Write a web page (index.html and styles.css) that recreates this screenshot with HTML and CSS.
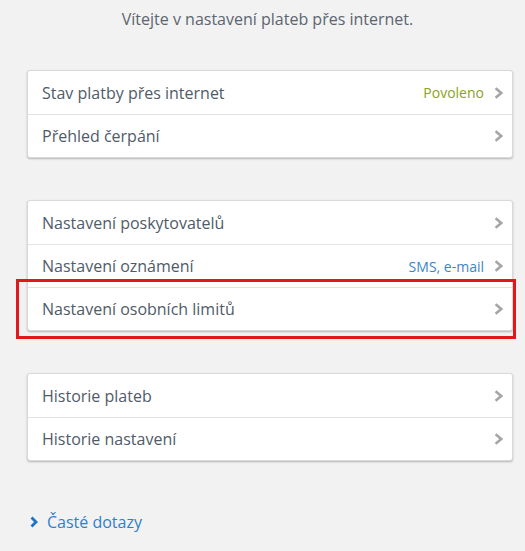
FILE: index.html
```html
<!DOCTYPE html>
<html lang="cs">
<head>
<meta charset="utf-8">
<link rel="stylesheet" href="styles.css">
</head>
<body>
<div class="page">
  <p class="welcome">Vítejte v nastavení plateb přes internet.</p>

  <ul class="card">
    <li class="row"><span class="label">Stav platby přes internet</span><span class="value green">Povoleno</span><svg class="chev" width="9" height="12" viewBox="0 0 9 12"><path d="M1.6 1.3 L7.2 6 L1.6 10.7"/></svg></li>
    <li class="row"><span class="label">Přehled čerpání</span><svg class="chev" width="9" height="12" viewBox="0 0 9 12"><path d="M1.6 1.3 L7.2 6 L1.6 10.7"/></svg></li>
  </ul>

  <ul class="card">
    <li class="row"><span class="label">Nastavení poskytovatelů</span><svg class="chev" width="9" height="12" viewBox="0 0 9 12"><path d="M1.6 1.3 L7.2 6 L1.6 10.7"/></svg></li>
    <li class="row"><span class="label">Nastavení oznámení</span><span class="value blue">SMS, e-mail</span><svg class="chev" width="9" height="12" viewBox="0 0 9 12"><path d="M1.6 1.3 L7.2 6 L1.6 10.7"/></svg></li>
    <li class="row highlighted"><span class="label">Nastavení osobních limitů</span><svg class="chev" width="9" height="12" viewBox="0 0 9 12"><path d="M1.6 1.3 L7.2 6 L1.6 10.7"/></svg></li>
  </ul>

  <ul class="card">
    <li class="row"><span class="label">Historie plateb</span><svg class="chev" width="9" height="12" viewBox="0 0 9 12"><path d="M1.6 1.3 L7.2 6 L1.6 10.7"/></svg></li>
    <li class="row"><span class="label">Historie nastavení</span><svg class="chev" width="9" height="12" viewBox="0 0 9 12"><path d="M1.6 1.3 L7.2 6 L1.6 10.7"/></svg></li>
  </ul>

  <a class="faq" href="#"><svg class="faq-icon" width="8" height="12" viewBox="0 0 8 12"><path d="M1.5 1.5 L6 6 L1.5 10.5" fill="none" stroke="#1a73c9" stroke-width="2.8"/></svg>Časté dotazy</a>
</div>
</body>
</html>
```
FILE: styles.css
```css
html, body {
  margin: 0;
  padding: 0;
  background: #f2f2f2;
}
body {
  font-family: "Open Sans", "Noto Sans", sans-serif;
  color: #505b68;
}
.page {
  width: 525px;
  height: 551px;
  padding: 8px 12px 0 27px;
  box-sizing: border-box;
}
.welcome {
  margin: 0 0 40px -5px;
  text-align: center;
  font-size: 16px;
  line-height: 22px;
  color: #5c6570;
}
.card {
  list-style: none;
  margin: 0 0 42px;
  padding: 0;
  background: #fff;
  border: 1px solid #d9d9d9;
  border-radius: 3px;
  box-shadow: 0 1px 2px rgba(0,0,0,0.25);
}
.row {
  position: relative;
  display: flex;
  align-items: center;
  height: 42px;
  padding: 0 9px 0 14px;
  font-size: 16px;
  border-top: 1px solid #e2e2e2;
}
.row:first-child {
  border-top: 0;
  height: 43px;
}
.label {
  flex: 1;
}
.value {
  font-size: 14px;
  margin-right: 10px;
}
.green { color: #8aa31a; }
.blue { color: #3a86c6; }
.chev {
  flex: none;
  fill: none;
  stroke: #a6a6a6;
  stroke-width: 2.6;
}
.highlighted::after {
  content: "";
  position: absolute;
  left: -12px;
  right: -4px;
  top: -9px;
  bottom: -9px;
  border: 3px solid #e3161b;
}
.faq {
  display: inline-flex;
  align-items: center;
  margin-top: 8px;
  margin-left: 3px;
  font-size: 16px;
  color: #2f7fcf;
  text-decoration: none;
}
.faq-icon {
  margin-right: 9px;
}
```
